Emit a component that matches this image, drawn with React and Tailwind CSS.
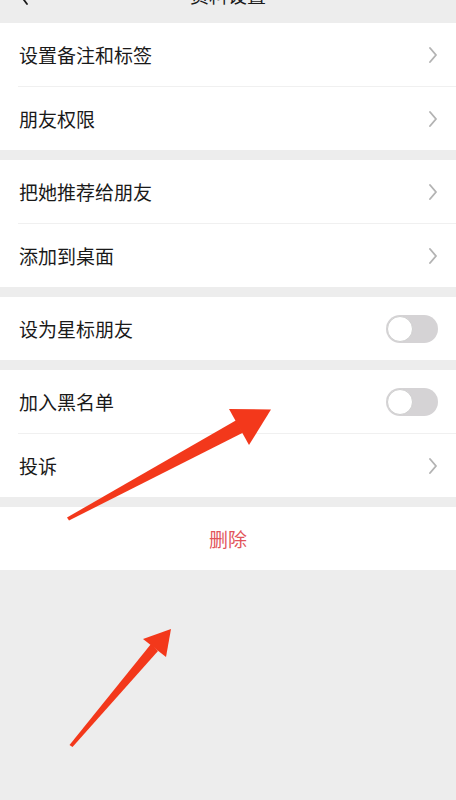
import React from 'react'

const font = { fontFamily: '"Noto Sans CJK SC", "Noto Sans", sans-serif' }

function Chevron() {
    return (
        <svg width="10" height="18" viewBox="0 0 10 18" className="shrink-0">
            <path d="M2 2 L8 9 L2 16" fill="none" stroke="#b3b3b3" strokeWidth="1.9" strokeLinecap="round" strokeLinejoin="round" />
        </svg>
    )
}

function Toggle() {
    return (
        <div className="w-[52px] h-[28px] rounded-full bg-[#d5d3d5] p-[1px] flex items-center shrink-0">
            <div className="w-[26px] h-[26px] rounded-full bg-white border border-[#cfcfcf]" />
        </div>
    )
}

function Row({ label, right = 'chevron' }) {
    return (
        <div className="h-[63px] flex items-center justify-between pl-[19px] pr-[18px]">
            <span className="text-[19px] text-[#1a1a1a] leading-none">{label}</span>
            {right === 'chevron' ? <Chevron /> : <Toggle />}
        </div>
    )
}

function Group({ children }) {
    const items = React.Children.toArray(children)
    return (
        <div className="bg-white">
            {items.map((child, i) => (
                <div key={i}>
                    {i > 0 && <div className="ml-[18px] h-px bg-[#f0f0f0]" />}
                    {child}
                </div>
            ))}
        </div>
    )
}

function Arrows() {
    return (
        <svg className="absolute inset-0 pointer-events-none" width="456" height="800" viewBox="0 0 456 800">
            <g fill="#f3381b">
                <polygon points="67,517.5 69,520.5 242.8,432.7 236.2,420.3" />
                <polygon points="229,409 271,409.5 249,445" />
                <polygon points="69.5,745 72.5,747 158,651 151,644" />
                <polygon points="143,639 171,629 166,657" />
            </g>
        </svg>
    )
}

export default function App() {
    return (
        <div className="relative w-[456px] h-[800px] bg-[#ededed] overflow-hidden" style={font}>
            <div className="h-[23px] relative overflow-hidden flex items-end justify-center pb-[19px]">
                <svg width="12" height="20" viewBox="0 0 12 20" className="absolute left-[18px] top-[-14px]">
                    <path d="M9 2 L3 10 L9 18" fill="none" stroke="#1a1a1a" strokeWidth="1.8" strokeLinecap="round" strokeLinejoin="round" />
                </svg>
                <span className="text-[19px] leading-none text-[#1a1a1a]">资料设置</span>
            </div>

            <div className="flex flex-col gap-[10px]">
                <Group>
                    <Row label="设置备注和标签" />
                    <Row label="朋友权限" />
                </Group>
                <Group>
                    <Row label="把她推荐给朋友" />
                    <Row label="添加到桌面" />
                </Group>
                <Group>
                    <Row label="设为星标朋友" right="toggle" />
                </Group>
                <Group>
                    <Row label="加入黑名单" right="toggle" />
                    <Row label="投诉" />
                </Group>
                <div className="bg-white h-[63px] flex items-center justify-center">
                    <span className="text-[19px] leading-none text-[#e2545a]">删除</span>
                </div>
            </div>

            <Arrows />
        </div>
    )
}
